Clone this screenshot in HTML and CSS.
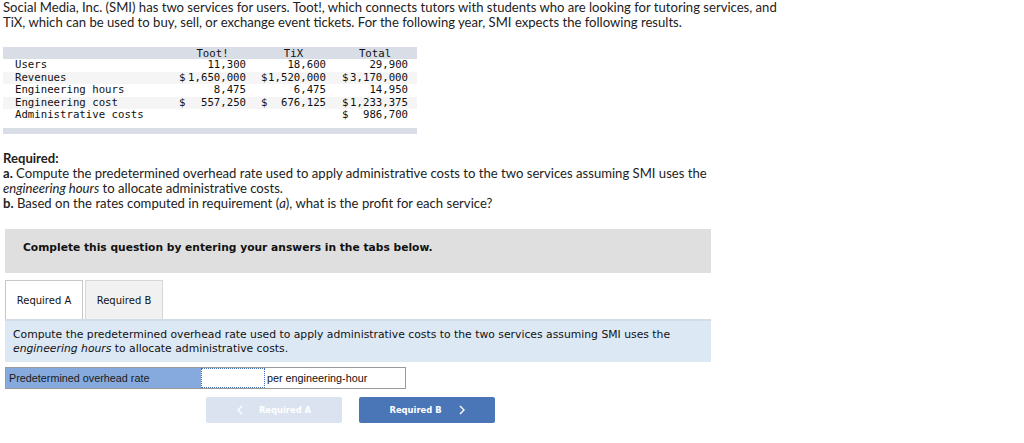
FILE: index.html
```html
<!DOCTYPE html>
<html>
<head>
<meta charset="utf-8">
<link rel="stylesheet" href="styles.css">
</head>
<body>
<div class="page">
  <p class="intro">Social Media, Inc. (SMI) has two services for users. Toot!, which connects tutors with students who are looking for tutoring services, and TiX, which can be used to buy, sell, or exchange event tickets. For the following year, SMI expects the following results.</p>

  <div class="data">
    <div class="row head">
      <div class="lbl"></div>
      <div class="col c1 center">Toot!</div>
      <div class="col c2 center">TiX</div>
      <div class="col c3 center">Total</div>
    </div>
    <div class="row">
      <div class="lbl">Users</div>
      <div class="col c1"><span></span><span>11,300</span></div>
      <div class="col c2"><span></span><span>18,600</span></div>
      <div class="col c3"><span></span><span>29,900</span></div>
    </div>
    <div class="row alt">
      <div class="lbl">Revenues</div>
      <div class="col c1"><span>$</span><span>1,650,000</span></div>
      <div class="col c2"><span>$</span><span>1,520,000</span></div>
      <div class="col c3"><span>$</span><span>3,170,000</span></div>
    </div>
    <div class="row">
      <div class="lbl">Engineering hours</div>
      <div class="col c1"><span></span><span>8,475</span></div>
      <div class="col c2"><span></span><span>6,475</span></div>
      <div class="col c3"><span></span><span>14,950</span></div>
    </div>
    <div class="row alt">
      <div class="lbl">Engineering cost</div>
      <div class="col c1"><span>$</span><span>557,250</span></div>
      <div class="col c2"><span>$</span><span>676,125</span></div>
      <div class="col c3"><span>$</span><span>1,233,375</span></div>
    </div>
    <div class="row">
      <div class="lbl">Administrative costs</div>
      <div class="col c1"></div>
      <div class="col c2"></div>
      <div class="col c3"><span>$</span><span>986,700</span></div>
    </div>
    <div class="foot"></div>
  </div>

  <div class="required">
    <p><b>Required:</b></p>
    <p><b>a.</b> Compute the predetermined overhead rate used to apply administrative costs to the two services assuming SMI uses the <i>engineering hours</i> to allocate administrative costs.</p>
    <p><b>b.</b> Based on the rates computed in requirement (<i>a</i>), what is the profit for each service?</p>
  </div>

  <div class="banner">Complete this question by entering your answers in the tabs below.</div>

  <div class="tabs">
    <div class="tab active">Required A</div>
    <div class="tab">Required B</div>
  </div>

  <div class="panel">Compute the predetermined overhead rate used to apply administrative costs to the two services assuming SMI uses the <i>engineering hours</i> to allocate administrative costs.</div>

  <div class="answer">
    <div class="alabel">Predetermined overhead rate</div>
    <div class="ainput"></div>
    <div class="aunit">per engineering-hour</div>
  </div>

  <div class="nav">
    <div class="btn prev"><svg class="chev" width="6" height="10" viewBox="0 0 6 10"><polyline points="5,1 1,5 5,9" fill="none" stroke="#fff" stroke-width="1.4"/></svg>Required A</div>
    <div class="btn next">Required B<svg class="chev r" width="6" height="10" viewBox="0 0 6 10"><polyline points="1,1 5,5 1,9" fill="none" stroke="#fff" stroke-width="1.4"/></svg></div>
  </div>
</div>
</body>
</html>
```

FILE: styles.css
```css
* { box-sizing: border-box; }
body {
  margin: 0;
  background: #fff;
  color: #222;
  font-family: "Lato", "Open Sans", "Liberation Sans", sans-serif;
}
.page { padding: 0 0 0 3px; }
p { margin: 0; }
.intro {
  font-size: 13.1px;
  line-height: 15px;
  width: 795px;
}
.data {
  margin-top: 17px;
  width: 414px;
  font-family: "DejaVu Sans Mono", monospace;
  font-size: 10.7px;
  color: #111;
}
.row {
  display: flex;
  height: 12.5px;
  line-height: 12.5px;
}
.row.head { background: #d9dde6; height: 12px; line-height: 13px; }
.row.alt { background: #f5f5f5; }
.lbl { width: 176px; padding-left: 12px; white-space: pre; }
.col { display: flex; justify-content: space-between; white-space: pre; }
.col.center { justify-content: center; }
.c1 { width: 67px; }
.c2 { width: 65px; margin-left: 15px; }
.c3 { width: 66px; margin-left: 16px; }
.foot { height: 6px; background: #d9dde6; margin-top: 6px; }

.required {
  margin-top: 17px;
  width: 725px;
  font-size: 13.1px;
  line-height: 15px;
}
.banner {
  margin: 18px 0 0 2px;
  width: 706px;
  height: 44px;
  background: #dfdfdf;
  font-family: "DejaVu Sans", Verdana, sans-serif;
  font-weight: bold;
  font-size: 10.7px;
  padding: 12px 0 0 18px;
  color: #111;
}
.tabs {
  display: flex;
  margin: 7px 0 0 2px;
  gap: 2px;
  height: 39px;
}
.tab {
  width: 78px;
  border: 1px solid #d6d6d6;
  border-bottom: none;
  background: #f1f1f1;
  font-family: "DejaVu Sans", Verdana, sans-serif;
  font-size: 10px;
  padding-top: 14px;
  text-align: center;
  color: #111;
}
.tab.active { background: #fff; border-color: #c8c8c8; }
.panel {
  margin-left: 2px;
  width: 706px;
  height: 43px;
  background: #dde8f5;
  border-top: 2px solid #d3dbe5;
  font-family: "DejaVu Sans", Verdana, sans-serif;
  font-size: 10.8px;
  line-height: 14px;
  padding: 7px 8px 0 8px;
  color: #111;
}
.answer {
  display: flex;
  margin: 5px 0 0 2px;
  width: 401px;
  height: 22px;
  border: 1px solid #9a9a9a;
  font-family: "Liberation Sans", Arial, sans-serif;
  font-size: 10.8px;
  line-height: 20px;
}
.alabel {
  width: 195px;
  background: #87aade;
  padding-left: 3px;
  color: #1a1a1a;
}
.ainput {
  width: 64px;
  border: 1px dotted #3d6fb6;
  background: #fff;
}
.aunit { padding-left: 2px; flex: 1; color: #111; }
.nav {
  display: flex;
  margin: 8px 0 0 203px;
  gap: 17px;
}
.btn {
  width: 136px;
  height: 26px;
  border-radius: 2px;
  display: flex;
  align-items: center;
  justify-content: center;
  font-family: "DejaVu Sans", Verdana, sans-serif;
  font-weight: bold;
  font-size: 8.4px;
  color: #fff;
}
.btn.prev { background: #dae3ef; }
.btn.next { background: #4a75b7; }
.chev { margin-right: 16px; }
.chev.r { margin: 0 0 0 17px; }
```
